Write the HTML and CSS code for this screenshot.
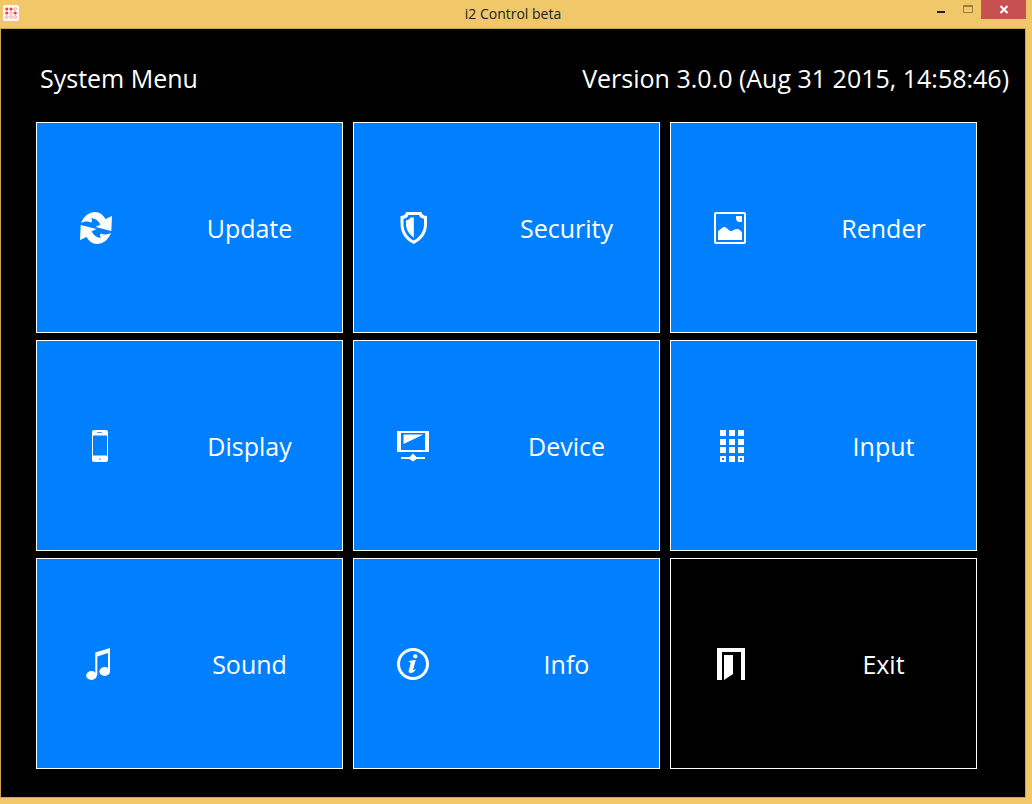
FILE: index.html
```html
<!DOCTYPE html>
<html lang="en">
<head>
<meta charset="utf-8">
<title>i2 Control beta</title>
<link rel="stylesheet" href="styles.css">
</head>
<body>
<div class="window">
  <header class="titlebar">
    <svg class="app-icon" viewBox="0 0 16 16" aria-hidden="true">
      <rect width="16" height="16" rx="2" fill="#fff6f4"/>
      <g fill="#e0404c"><circle cx="3.8" cy="4" r="1.6"/><circle cx="8" cy="4" r="1.6"/><circle cx="3.8" cy="8" r="1.6"/><circle cx="12.2" cy="8" r="1.6"/></g>
      <g fill="none" stroke="#eb8f94" stroke-width=".7"><circle cx="12.2" cy="4" r="1.3"/><circle cx="8" cy="8" r="1.3"/><circle cx="3.8" cy="12" r="1.3"/><circle cx="8" cy="12" r="1.3"/><circle cx="12.2" cy="12" r="1.3"/></g>
    </svg>
    <span class="title">i2 Control beta</span>
    <div class="controls">
      <button class="control" type="button" aria-label="Minimize"><svg viewBox="0 0 27 19"><path d="M10 11h8v2h-8z" fill="#222"/></svg></button>
      <button class="control" type="button" aria-label="Maximize"><svg viewBox="0 0 27 19"><path d="M9.500 5.500h9v7h-9zM9 6.500h10" fill="none" stroke="#987d48"/></svg></button>
      <button class="control close" type="button" aria-label="Close"><svg viewBox="0 0 45 19"><path d="M19.500 6l7 7M26.500 6l-7 7" fill="none" stroke="#fff" stroke-width="2"/></svg></button>
    </div>
  </header>
  <main class="screen">
    <div class="heading">
      <h1 class="heading-text">System Menu</h1>
      <p class="heading-text">Version 3.0.0 (Aug 31 2015, 14:58:46)</p>
    </div>
    <nav class="menu" aria-label="System Menu">
      <button class="tile" type="button">
        <svg class="icon" viewBox="0 0 32 32"><path id="arrow" d="M1 11C4 4 9 0 15 0c5 0 8 3 10.500 7L32 4l-.7 15-15.800-4 5-2.600C18 8.500 15 5.800 11 6.300 12.500 8 12.500 9.500 11 10.500 8 9 4 9.500 1 11z"/><use href="#arrow" transform="rotate(180 16 16)"/></svg>
        <span class="label">Update</span>
      </button>
      <button class="tile" type="button">
        <svg class="icon" viewBox="0 0 32 32"><path fill-rule="evenodd" d="M9 0h15.500c.3 2.500 2 3.800 5.500 4v8c0 9-5 16-13.300 20C8.500 28 3.500 21 3.500 12V4C7 3.800 8.700 2.500 9 0zm2.500 3C11 5 9.500 6.300 6.500 6.800V12c0 7.500 4 13 10.200 16.600C23 25 27 19.500 27 12V6.800C24 6.300 22.500 5 22 3z"/><path d="M16.800 5.500v20.200C12 22 9 18 9 12V8.500c2.500-.4 3.500-1.400 4.500-3z"/></svg>
        <span class="label">Security</span>
      </button>
      <button class="tile" type="button">
        <svg class="icon" viewBox="0 0 32 32"><path fill-rule="evenodd" d="M2 0h28a2 2 0 0 1 2 2v28a2 2 0 0 1-2 2H2a2 2 0 0 1-2-2V2a2 2 0 0 1 2-2zm0 2v28h28V2z"/><path d="M4 28v-9c2-1 4-4 6.500-4s4 4 6.500 4 3-2 6-2 3 2 5 3v8zM22 4h6v6h-2a4 4 0 0 1-4-4z"/></svg>
        <span class="label">Render</span>
      </button>
      <button class="tile" type="button">
        <svg class="icon" viewBox="0 0 32 32"><path fill-rule="evenodd" d="M14 0h12a2 2 0 0 1 2 2v28a2 2 0 0 1-2 2H14a2 2 0 0 1-2-2V2a2 2 0 0 1 2-2zm-1 5.500v20h14v-20zM17 2.300v.8h5v-.8z"/><path d="M19 28h2v2h-2z" fill="#9fcfff"/></svg>
        <span class="label">Display</span>
      </button>
      <button class="tile" type="button">
        <svg class="icon" viewBox="0 0 32 32"><path fill-rule="evenodd" d="M0 1h32v21H0zm4 2v17h24V3z"/><path d="M6.500 4.500h20l-20 9.500zM4 27h8.500L16 23.500l3.500 3.500H28v2h-8.500L16 31.500 12.500 29H4z"/></svg>
        <span class="label">Device</span>
      </button>
      <button class="tile" type="button">
        <svg class="icon" viewBox="0 0 32 32"><path fill-rule="evenodd" d="M6 0h6v6H6zM15 0h6v6h-6zM24 0h6v6h-6zM6 9h6v6H6zM15 9h6v6h-6zM24 9h6v6h-6zM6 17h6v6H6zM15 17h6v6h-6zM24 17h6v6h-6zM6 26h6v6H6zM15 26h6v6h-6zM24 26h6v6h-6zM8 28v2h2v-2zM26 28v2h2v-2z"/></svg>
        <span class="label">Input</span>
      </button>
      <button class="tile" type="button">
        <svg class="icon" viewBox="0 0 32 32"><path d="M15.300 4.500L30 0v23h-2V5L17.300 8.500V27h-2z"/><ellipse cx="11.500" cy="27.500" rx="5.300" ry="4.400"/><ellipse cx="24.700" cy="23.500" rx="5.300" ry="4.400"/></svg>
        <span class="label">Sound</span>
      </button>
      <button class="tile" type="button">
        <svg class="icon" viewBox="0 0 32 32"><circle cx="16" cy="16" r="14.500" fill="none" stroke="#fff" stroke-width="3"/><circle cx="18.300" cy="8.300" r="2.100"/><path d="M11.500 13.500c2-1 4-1.500 7.300-1.500l-2.700 9.500c-.2 1 1 .8 3-.8-1.500 3-3.500 4.300-5.500 4.300-1.800 0-2.300-1.200-1.800-3l2-7z"/></svg>
        <span class="label">Info</span>
      </button>
      <button class="tile tile-exit" type="button">
        <svg class="icon" viewBox="0 0 32 32"><path d="M3 0h28v32h-4V4H8v28H3zM10 7h9v19l-9 6z"/></svg>
        <span class="label">Exit</span>
      </button>
    </nav>
  </main>
</div>
</body>
</html>
```
FILE: styles.css
```css
* { box-sizing: border-box; }

body {
  margin: 0;
  font-family: "Open Sans", "Noto Sans", sans-serif;
  background: #f0c869;
}

.window {
  display: flex;
  flex-direction: column;
  min-height: 100vh;
  padding: 0 6px 6px 0;
}

.titlebar {
  display: grid;
  grid-template-columns: 1fr auto 1fr;
  align-items: start;
  height: 28px;
}

.app-icon {
  width: 16px;
  height: 16px;
  margin: 5px 3px;
}

.title {
  font-size: 14px;
  line-height: 28px;
  color: #222;
}

.controls {
  display: flex;
  justify-content: flex-end;
}

.control {
  width: 27px;
  height: 19px;
  padding: 0;
  border: 0;
  background: none;
}

.control svg { display: block; }

.close {
  width: 45px;
  background: #c75050;
}

.screen {
  flex: 1;
  display: flex;
  flex-direction: column;
  padding: 28px 48px 28px 35px;
  border: 1px solid #c9a44f;
  background: #000;
}

.heading {
  display: flex;
  justify-content: space-between;
  margin: 0 -32px 23px 4px;
}

.heading-text {
  margin: 0;
  font-size: 25px;
  font-weight: 400;
  line-height: 42px;
  color: #fff;
}

.menu {
  flex: 1;
  display: grid;
  grid-template-columns: repeat(3, 1fr);
  grid-auto-rows: 1fr;
  gap: 7px 10px;
}

.tile {
  display: grid;
  grid-template-columns: 118px 1fr;
  align-items: center;
  justify-items: center;
  padding: 0;
  border: 1px solid #fff;
  background: #0080ff;
  color: #fff;
  font-family: inherit;
  font-size: 25px;
  line-height: 36px;
}

.tile-exit { background: #000; }

.label { padding-left: 2px; }

.icon {
  width: 32px;
  height: 32px;
  fill: #fff;
}
```
